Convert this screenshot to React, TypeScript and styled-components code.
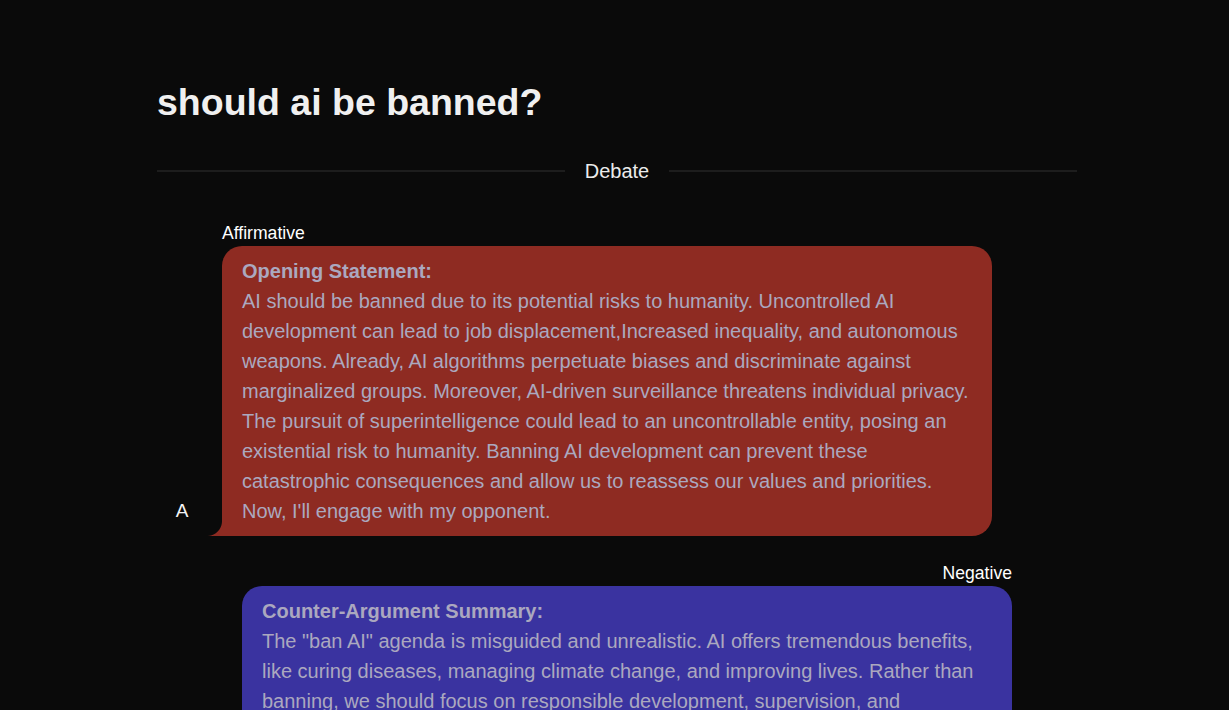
import React from "react";
import styled, { createGlobalStyle } from "styled-components";

const GlobalStyle = createGlobalStyle`
  html, body {
    margin: 0;
    padding: 0;
    background: #0a0a0a;
    font-family: "Liberation Sans", Arial, sans-serif;
  }
  body::-webkit-scrollbar { display: none; }
`;

const Page = styled.div`
  min-height: 100vh;
  background: #0a0a0a;
  padding: 80px 0 40px 157px;
  box-sizing: border-box;
`;

const Container = styled.div`
  width: 920px;
  display: flex;
  flex-direction: column;
`;

const Title = styled.h1`
  margin: 0;
  font-size: 37.5px;
  line-height: 44px;
  font-weight: 700;
  color: #f0f0f0;
`;

const DividerRow = styled.div`
  display: flex;
  align-items: center;
  gap: 20px;
  margin-top: 35px;
`;

const Rule = styled.div`
  flex: 1;
  height: 2px;
  background: #1d1d1d;
`;

const DividerLabel = styled.span`
  font-size: 20px;
  line-height: 24px;
  color: #ececec;
`;

const Thread = styled.div`
  display: flex;
  flex-direction: column;
  gap: 27px;
  margin-top: 40px;
`;

const Row = styled.div<{ $side: "left" | "right" }>`
  display: flex;
  flex-direction: ${(p) => (p.$side === "left" ? "row" : "row-reverse")};
  align-items: flex-end;
`;

const Avatar = styled.div`
  width: 50px;
  height: 50px;
  flex: none;
  display: flex;
  align-items: center;
  justify-content: center;
  font-size: 19px;
  color: #f4f4f4;
`;

const Column = styled.div<{ $side: "left" | "right" }>`
  width: 770px;
  margin: 0 15px;
  display: flex;
  flex-direction: column;
  align-items: ${(p) => (p.$side === "left" ? "flex-start" : "flex-end")};
  gap: 3px;
`;

const Speaker = styled.div`
  font-size: 17.6px;
  line-height: 20px;
  color: #ffffff;
`;

const Bubble = styled.div<{ $side: "left" | "right"; $bg: string }>`
  position: relative;
  box-sizing: border-box;
  width: 100%;
  padding: 10px 20px;
  background: ${(p) => p.$bg};
  color: #aba8bf;
  font-size: 20px;
  line-height: 30px;
  border-radius: ${(p) => (p.$side === "left" ? "20px 20px 20px 0" : "20px 20px 0 20px")};

  &::after {
    content: "";
    position: absolute;
    bottom: 0;
    width: 15px;
    height: 15px;
    ${(p) => (p.$side === "left" ? "left: -15px;" : "right: -15px;")}
    background: radial-gradient(
      circle at ${(p) => (p.$side === "left" ? "0 0" : "100% 0")},
      transparent 14.5px,
      ${(p) => p.$bg} 15.5px
    );
  }
`;

const Heading = styled.div`
  font-weight: 700;
`;

const messages = [
  {
    side: "left" as const,
    name: "Affirmative",
    initial: "A",
    bg: "#8e2b22",
    heading: "Opening Statement:",
    body:
      "AI should be banned due to its potential risks to humanity. Uncontrolled AI development can lead to job displacement,Increased inequality, and autonomous weapons. Already, AI algorithms perpetuate biases and discriminate against marginalized groups. Moreover, AI-driven surveillance threatens individual privacy. The pursuit of superintelligence could lead to an uncontrollable entity, posing an existential risk to humanity. Banning AI development can prevent these catastrophic consequences and allow us to reassess our values and priorities. Now, I'll engage with my opponent.",
  },
  {
    side: "right" as const,
    name: "Negative",
    initial: "N",
    bg: "#3a33a0",
    heading: "Counter-Argument Summary:",
    body:
      "The \"ban AI\" agenda is misguided and unrealistic. AI offers tremendous benefits, like curing diseases, managing climate change, and improving lives. Rather than banning, we should focus on responsible development, supervision, and regulation. Addressing bias, privacy and safety through ethical guidelines and oversight lets us keep the benefits while managing the risks.",
  },
];

export default function App() {
  return (
    <>
      <GlobalStyle />
      <Page>
        <Container>
          <Title>should ai be banned?</Title>
          <DividerRow>
            <Rule />
            <DividerLabel>Debate</DividerLabel>
            <Rule />
          </DividerRow>
          <Thread>
            {messages.map((m) => (
              <Row key={m.name} $side={m.side}>
                <Avatar>{m.initial}</Avatar>
                <Column $side={m.side}>
                  <Speaker>{m.name}</Speaker>
                  <Bubble $side={m.side} $bg={m.bg}>
                    <Heading>{m.heading}</Heading>
                    {m.body}
                  </Bubble>
                </Column>
              </Row>
            ))}
          </Thread>
        </Container>
      </Page>
    </>
  );
}
